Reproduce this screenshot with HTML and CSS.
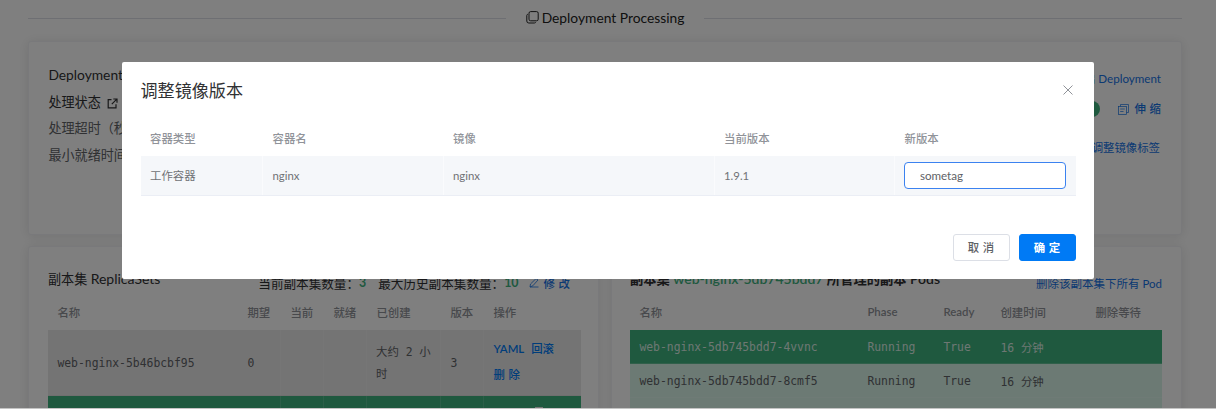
FILE: index.html
```html
<!DOCTYPE html>
<html lang="zh-CN">
<head>
<meta charset="utf-8">
<title>Deployment</title>
<link rel="stylesheet" href="styles.css">
</head>
<body>
<div class="page">
  <div class="top-cards"><div class="card"></div><div class="card"></div><div class="card"></div></div>
  <div class="divider">
    <span class="rule"></span>
    <span class="divider-label">
      <svg width="13" height="13" viewBox="0 0 13 13" fill="none" stroke="currentColor"><rect x="3" y=".6" width="9.2" height="9.2" rx="1.6"/><path d="M1.8 3.2Q.8 3.4.8 4.5V10Q.8 12 2.8 12H8.3Q9.4 12 9.8 11.2"/></svg>
      <span>Deployment Processing</span>
    </span>
    <span class="rule"></span>
  </div>
  <section class="card processing">
    <div class="proc-left">
      <div class="line dark lat">Deployment</div>
      <div class="line dark">处理状态 <svg class="ext" width="11" height="11" viewBox="0 0 11 11" fill="none" stroke="currentColor" stroke-width="1.2"><path d="M4.5 1.7H1.2V9.8H9V6.2M6.3 1H10V4.7M9.8 1.2 4.8 6.2"/></svg></div>
      <div class="line">处理超时（秒）</div>
      <div class="line">最小就绪时间</div>
    </div>
    <div class="proc-right">
      <div class="link">重启 Deployment</div>
      <div class="scale"><span class="pill"></span><span class="link"><svg width="11" height="11" viewBox="0 0 11 11" fill="none" stroke="currentColor" stroke-width=".7"><path d="M2.5 2.5V.5h8v8h-2"/><rect x=".5" y="2.5" width="8" height="8"/><path d="M2.2 5H6.8M2.2 7.5H5.5"/></svg><span class="spaced">伸 缩</span></span></div>
      <div class="link">调整镜像标签</div>
    </div>
  </section>
  <div class="columns">
    <section class="card replica">
      <div class="head"><span class="title">副本集 <span class="lat">ReplicaSets</span></span>
        <span class="meta"><span>当前副本集数量：</span><b class="n3">3</b><span>最大历史副本集数量：</span><b class="n10">10</b><span class="link"><svg width="10" height="10" viewBox="0 0 10 10" fill="none" stroke="currentColor" stroke-width=".8"><path d="M1 9 1.5 6 7 .6 9 2 3.8 7.8 1 9H9.5"/></svg><span class="spaced">修 改</span></span></span>
      </div>
      <div class="rs-grid th"><span>名称</span><span>期望</span><span>当前</span><span>就绪</span><span>已创建</span><span>版本</span><span>操作</span></div>
      <div class="rs-grid tr grey"><span>web-nginx-5b46bcbf95</span><span>0</span><span></span><span></span><span class="age">大约 2 小时</span><span>3</span><span class="acts"><span class="link yaml">YAML</span><span class="link">回滚</span><span class="link del spaced">删 除</span></span></div>
      <div class="rs-grid tr green"><span></span><span></span><span></span><span></span><span></span><span></span><span class="peek"><i></i></span></div>
    </section>
    <section class="card pods">
      <div class="head"><span class="title bold">副本集 <span class="hl lat">web-nginx-5db745bdd7</span> 所管理的副本 <span class="lat">Pods</span></span><span class="meta link all">删除该副本集下所有 Pod</span></div>
      <div class="pod-grid th"><span>名称</span><span class="strong">Phase</span><span class="strong">Ready</span><span>创建时间</span><span>删除等待</span></div>
      <div class="pod-grid pod green"><span>web-nginx-5db745bdd7-4vvnc</span><span>Running</span><span>True</span><span>16 分钟</span><span></span></div>
      <div class="pod-grid pod mint"><span>web-nginx-5db745bdd7-8cmf5</span><span>Running</span><span>True</span><span>16 分钟</span><span></span></div>
      <div class="mint rest"></div>
    </section>
  </div>
</div>
<div class="overlay">
  <div class="modal">
    <div class="modal-head"><span>调整镜像版本</span><svg width="10" height="10" viewBox="0 0 10 10" stroke="#909399" fill="none"><path d="M.5.5l9 9M9.5.5l-9 9"/></svg></div>
    <div class="img-grid ih"><span>容器类型</span><span>容器名</span><span>镜像</span><span>当前版本</span><span>新版本</span></div>
    <div class="img-grid ir"><span>工作容器</span><span>nginx</span><span>nginx</span><span>1.9.1</span><span class="cell-input"><input class="tag" value="sometag"></span></div>
    <div class="foot"><button class="btn">取 消</button><button class="btn primary">确 定</button></div>
  </div>
</div>
</body>
</html>
```

FILE: styles.css
```css
* { box-sizing: border-box; }
html { background: #c4c4c4; }
body { margin: 0; height: 409px; overflow: hidden; position: relative; font-family: Lato, "Noto Sans CJK SC", sans-serif; color: #303133; }
.page { height: 408px; overflow: hidden; background: #fff; padding: 0 34px 0 28px; }
.overlay { position: absolute; top: 0; left: 0; width: 1216px; height: 408px; background: rgba(0,0,0,.5); display: flex; justify-content: center; align-items: flex-start; padding-top: 62px; }
.card { background: #fff; border: 1px solid #f2f3f6; border-radius: 3px; box-shadow: 0 1px 12px rgba(0,0,0,.1); }
.top-cards { display: grid; grid-template-columns: 183px 1fr 1fr; gap: 12px; height: 1px; }
.top-cards .card { border: 0; }
.divider { height: 40px; display: flex; align-items: center; gap: 20px; padding-bottom: 7px; }
.rule { flex: 1; height: 1px; background: #dcdfe6; margin-top: 1px; }
.divider-label { display: flex; align-items: center; gap: 3px; font-size: 13.8px; color: #222; }
.processing { height: 194px; display: flex; justify-content: space-between; padding: 19px 20px 0 19.4px; }
.line { height: 26.7px; line-height: 28px; font-size: 13.1px; color: #606266; white-space: nowrap; }
.line.dark { color: #303133; }
.line.lat { font-size: 13.8px; }
.ext { margin-left: 3px; vertical-align: -2px; }
.link { color: #1673e6; }
.proc-right { font-size: 11.6px; text-align: right; line-height: 16px; padding-top: 10px; }
.scale { display: flex; justify-content: flex-end; align-items: center; height: 44px; }
.scale .link { display: flex; align-items: center; gap: 6px; font-size: 11.4px; font-weight: 500; }
.pill { width: 40px; height: 16px; border-radius: 8px; background: #3eb27e; margin-right: 18px; }
.spaced { word-spacing: .8px; }
.proc-right > .link:last-child { padding: 9px 1px 0 0; font-size: 11.4px; }
.columns { display: grid; grid-template-columns: 571px 571px; gap: 12px; margin-top: 11px; }
.replica, .pods { height: 220px; overflow: hidden; }
.replica { padding: 19px 17px 0 19px; }
.pods { padding: 19px 19px 0 18px; }
.head { height: 34px; display: flex; justify-content: space-between; white-space: nowrap; }
.title { font-size: 13.1px; line-height: 26px; }
.lat { font-size: 14px; }
.bold { font-weight: 600; font-size: 13.3px; }
.bold .lat { font-size: 14px; }
.hl { color: #3eb27e; }
.meta { display: flex; align-items: center; height: 33px; font-size: 12.6px; }
.meta.all { font-size: 11.5px; }
.n3, .n10 { color: #3eb27e; font-size: 12.4px; }
.n3 { margin: 0 12px 0 0; }
.n10 { margin: 0 10px 0 0; }
.meta .link { display: flex; align-items: center; gap: 5px; padding-right: 11px; font-size: 11.4px; font-weight: 500; }
.rs-grid { display: grid; grid-template-columns: 190px 43px 43px 43px 74px 43px 97px; align-items: center; }
.rs-grid > span, .pod-grid > span { padding-left: 9.4px; white-space: nowrap; }
.th { height: 30px; padding-bottom: 7px; font-size: 11.4px; font-weight: 500; color: #909399; }
.th > .strong { font-weight: 600; }
.tr, .pod { font: 11.4px "DejaVu Sans Mono", "Noto Sans CJK SC", monospace; color: #606266; }
.tr { height: 66px; }
.grey { background: #e9e9e9; border-bottom: 1px solid #dedede; }
.green { background: #3eb27e; }
.mint { background: #d8f5e9; }
.tr > span + span { display: flex; align-items: center; height: 100%; border-right: 1px solid rgba(255,255,255,.14); }
.tr > span.age { display: block; white-space: normal; line-height: 22px; padding: 11px 4px 0 9px; }
.tr > span.acts { display: flex; flex-wrap: wrap; align-content: center; gap: 0 7px; padding-bottom: 2px; line-height: 26px; font-family: Lato, "Noto Sans CJK SC", sans-serif; border: 0; }
.acts .link { color: #007af5; font-weight: 500; }
.acts .yaml { font-weight: 600; }
.del { width: 60px; }
.tr > span.peek { align-items: flex-start; padding: 11px 0 0 51px; border: 0; }
.peek i { width: 8px; height: 6px; background: #eee; }
.pod-grid { display: grid; grid-template-columns: 228px 76px 57px 95px 1fr; align-items: center; }
.pod { height: 34px; border-bottom: 1px solid rgba(255,255,255,.18); }
.pod.green { color: #dcefe6; }
.rest { height: 30px; }
.modal { width: 972px; height: 217px; background: #fff; border-radius: 2px; padding: 0 18.5px; }
.modal-head { display: flex; justify-content: space-between; align-items: center; height: 60px; padding: 0 3px 5px 0; font-size: 17.1px; }
.img-grid { display: grid; grid-template-columns: 122.5px 180.5px 271px 180.5px 180.5px; font-size: 11.4px; align-items: center; }
.img-grid > span { padding-left: 9.5px; }
.ih { height: 34px; padding-bottom: 2px; color: #909399; font-weight: 500; }
.ir { height: 40px; background: #f5f7fa; border-bottom: 1px solid #ebeef5; color: #707276; }
.ir > span { height: 39px; line-height: 39px; border-right: 1px solid #fafbfd; }
.ir > .cell-input { border: 0; padding: 6px 0 0 8.9px; line-height: 1; }
.tag { display: block; width: 162px; height: 27px; border: 1px solid #3b82f0; border-radius: 4px; padding: 0 15px; font: 11.6px Lato, sans-serif; color: #606266; background: #fff; outline: 0; }
.foot { display: flex; justify-content: flex-end; gap: 9px; padding-top: 38px; }
.btn { width: 57px; height: 27px; padding: 0 0 2px; border: 1px solid #dcdfe6; border-radius: 3px; background: #fff; color: #606266; font: 500 11.4px Lato, "Noto Sans CJK SC", sans-serif; word-spacing: .8px; }
.primary { background: #007af5; border-color: #007af5; color: #fff; font-weight: 700; }
```
